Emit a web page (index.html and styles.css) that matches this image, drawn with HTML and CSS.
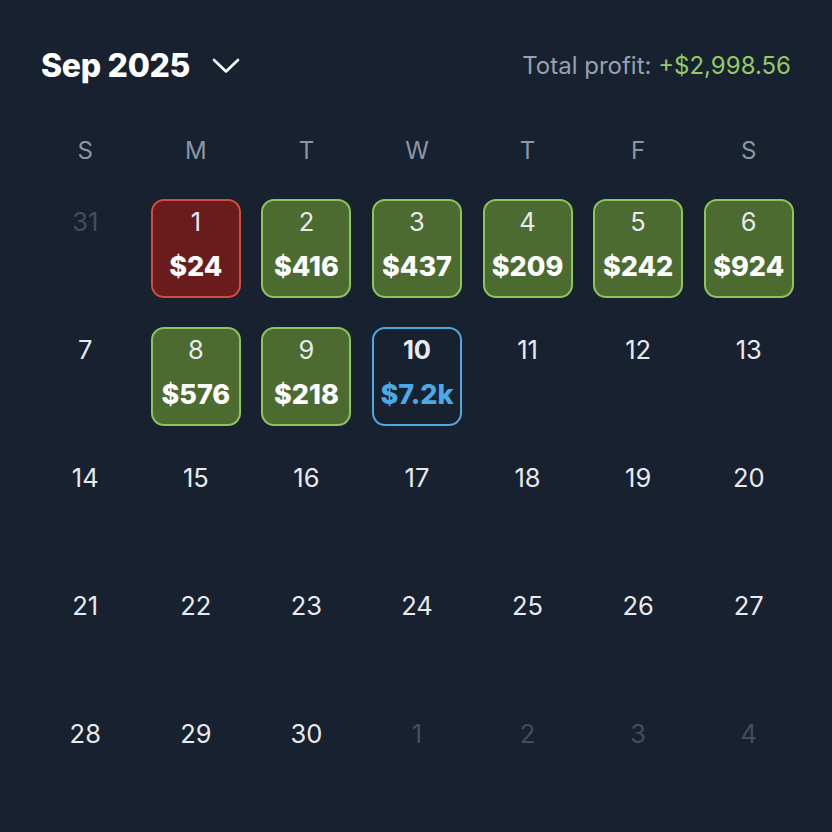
FILE: index.html
```html
<!DOCTYPE html>
<html>
<head>
<meta charset="utf-8">
<link rel="stylesheet" href="styles.css">
</head>
<body>
<div class="calendar">
  <div class="header">
    <div class="month">
      <span class="month-title">Sep 2025</span>
      <svg class="chevron" width="28" height="16" viewBox="0 0 28 16"><path d="M2 2 L14 13.5 L26 2" fill="none" stroke="#ffffff" stroke-width="2.6" stroke-linecap="round" stroke-linejoin="round"/></svg>
    </div>
    <div class="total">Total profit: <span class="pos">+$2,998.56</span></div>
  </div>
  <div class="weekdays">
    <div class="wd">S</div><div class="wd">M</div><div class="wd">T</div><div class="wd">W</div><div class="wd">T</div><div class="wd">F</div><div class="wd">S</div>
  </div>
  <div class="grid">
    <div class="day muted"><span class="num">31</span></div>
    <div class="day loss"><span class="num">1</span><span class="amt">$24</span></div>
    <div class="day win"><span class="num">2</span><span class="amt">$416</span></div>
    <div class="day win"><span class="num">3</span><span class="amt">$437</span></div>
    <div class="day win"><span class="num">4</span><span class="amt">$209</span></div>
    <div class="day win"><span class="num">5</span><span class="amt">$242</span></div>
    <div class="day win"><span class="num">6</span><span class="amt">$924</span></div>

    <div class="day"><span class="num">7</span></div>
    <div class="day win"><span class="num">8</span><span class="amt">$576</span></div>
    <div class="day win"><span class="num">9</span><span class="amt">$218</span></div>
    <div class="day today"><span class="num">10</span><span class="amt">$7.2k</span></div>
    <div class="day"><span class="num">11</span></div>
    <div class="day"><span class="num">12</span></div>
    <div class="day"><span class="num">13</span></div>

    <div class="day"><span class="num">14</span></div>
    <div class="day"><span class="num">15</span></div>
    <div class="day"><span class="num">16</span></div>
    <div class="day"><span class="num">17</span></div>
    <div class="day"><span class="num">18</span></div>
    <div class="day"><span class="num">19</span></div>
    <div class="day"><span class="num">20</span></div>

    <div class="day"><span class="num">21</span></div>
    <div class="day"><span class="num">22</span></div>
    <div class="day"><span class="num">23</span></div>
    <div class="day"><span class="num">24</span></div>
    <div class="day"><span class="num">25</span></div>
    <div class="day"><span class="num">26</span></div>
    <div class="day"><span class="num">27</span></div>

    <div class="day"><span class="num">28</span></div>
    <div class="day"><span class="num">29</span></div>
    <div class="day"><span class="num">30</span></div>
    <div class="day muted"><span class="num">1</span></div>
    <div class="day muted"><span class="num">2</span></div>
    <div class="day muted"><span class="num">3</span></div>
    <div class="day muted"><span class="num">4</span></div>
  </div>
</div>
</body>
</html>
```

FILE: styles.css
```css
html, body {
  margin: 0;
  padding: 0;
  background: #172130;
}
body {
  width: 832px;
  height: 832px;
  font-family: "Inter", "Noto Sans", sans-serif;
  color: #e8eaee;
}
.calendar {
  padding: 44px 28px 0 30px;
}
.header {
  display: flex;
  justify-content: space-between;
  align-items: center;
  height: 42px;
  padding: 0 13px 0 11px;
}
.month {
  display: flex;
  align-items: center;
  gap: 22px;
}
.month-title {
  font-size: 32px;
  font-weight: 800;
  color: #ffffff;
  letter-spacing: -0.3px;
}
.chevron {
  display: block;
  margin-top: 2px;
}
.total {
  font-size: 24px;
  color: #98a1ae;
}
.total .pos {
  color: #93c964;
}
.weekdays {
  display: grid;
  grid-template-columns: repeat(7, 1fr);
  margin-top: 47px;
  height: 36px;
}
.wd {
  line-height: 36px;
  text-align: center;
  font-size: 24px;
  color: #8c96a4;
}
.grid {
  display: grid;
  grid-template-columns: repeat(7, 1fr);
  grid-auto-rows: 99px;
  row-gap: 29px;
  margin-top: 30px;
}
.day {
  width: 90px;
  height: 99px;
  box-sizing: border-box;
  justify-self: center;
  display: flex;
  flex-direction: column;
  align-items: center;
  padding-top: 6px;
  border-radius: 13px;
  border: 2px solid transparent;
}
.num {
  font-size: 25.5px;
  line-height: 30px;
  color: #e8eaee;
}
.amt {
  margin-top: 14px;
  font-size: 27px;
  line-height: 32px;
  font-weight: 800;
  color: #ffffff;
}
.muted .num {
  color: #434d5b;
}
.loss {
  background: #6a1b1b;
  border-color: #d34d3b;
}
.win {
  background: #4c6b31;
  border-color: #8cc65a;
}
.today {
  border-color: #4ea8df;
}
.today .num {
  font-weight: 700;
}
.today .amt {
  color: #4aaae6;
}
```
